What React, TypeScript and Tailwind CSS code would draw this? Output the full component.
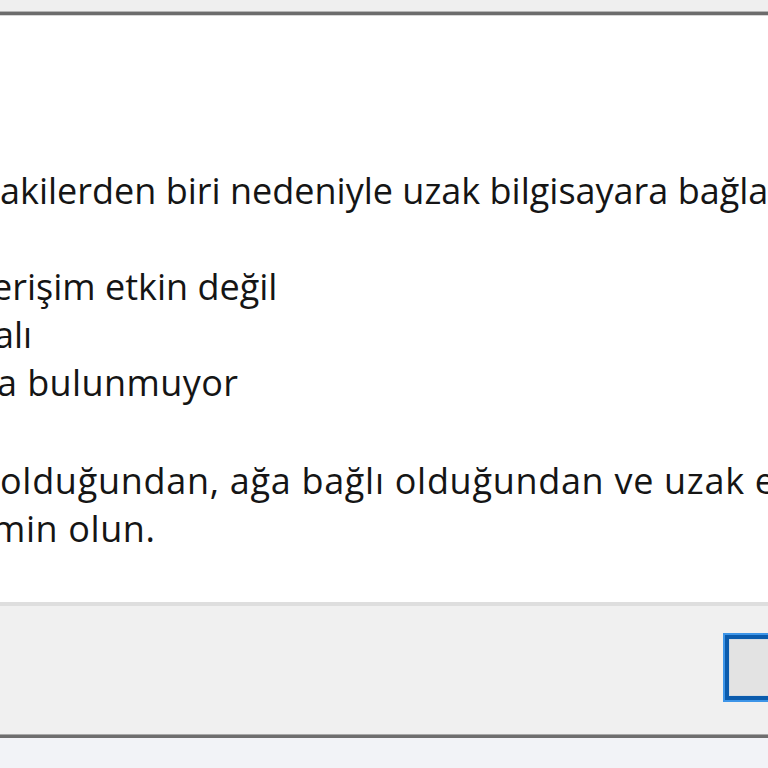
import React from 'react';

const App: React.FC = () => {
  return (
    <div className="w-[768px] h-[768px] overflow-hidden bg-white flex flex-col font-['Open_Sans',sans-serif]">
      {/* title strip, cut off at the top */}
      <div className="h-[11px] shrink-0 bg-[#efefef]" />
      <div className="h-[1px] shrink-0 bg-[#b4b4b4]" />
      <div className="h-[3px] shrink-0 bg-[#6c6c6c]" />
      <div className="h-[1px] shrink-0 bg-[#d6d6d6]" />

      {/* message body */}
      <div className="h-[586px] shrink-0 bg-white pt-[151px] text-[36px] leading-[48px] text-[#151515] whitespace-nowrap">
        <div>akilerden biri nedeniyle uzak bilgisayara bağlanamıyor:</div>
        <div className="mt-[48px] -ml-[8px]">erişim etkin değil</div>
        <div className="-ml-[6px]">alı</div>
        <div className="-ml-[3px] tracking-[0.4px]">a bulunmuyor</div>
        <div className="mt-[50px] tracking-[0.7px]">olduğundan, ağa bağlı olduğundan ve uzak erişimin etkin olduğundan</div>
        <div className="-ml-[8px] tracking-[0.6px]">min olun.</div>
      </div>

      {/* button bar */}
      <div className="h-[4px] shrink-0 bg-[#dedede]" />
      <div className="h-[128px] shrink-0 bg-[#f0f0f0] flex items-start pt-[27px] pl-[723px]">
        <div className="shrink-0 w-[140px] h-[69px] border-[2px] border-[#3d95e8]">
          <div className="w-full h-full border-[4px] border-[#0a5bad]">
            <div className="w-full h-full border border-[#d3dbe3] bg-[#e3e3e3]" />
          </div>
        </div>
      </div>
      <div className="h-[1px] shrink-0 bg-[#a8a8a8]" />
      <div className="h-[3px] shrink-0 bg-[#6e6e6e]" />
      <div className="flex-1 bg-[#f2f3f7]" />
    </div>
  );
};

export default App;
